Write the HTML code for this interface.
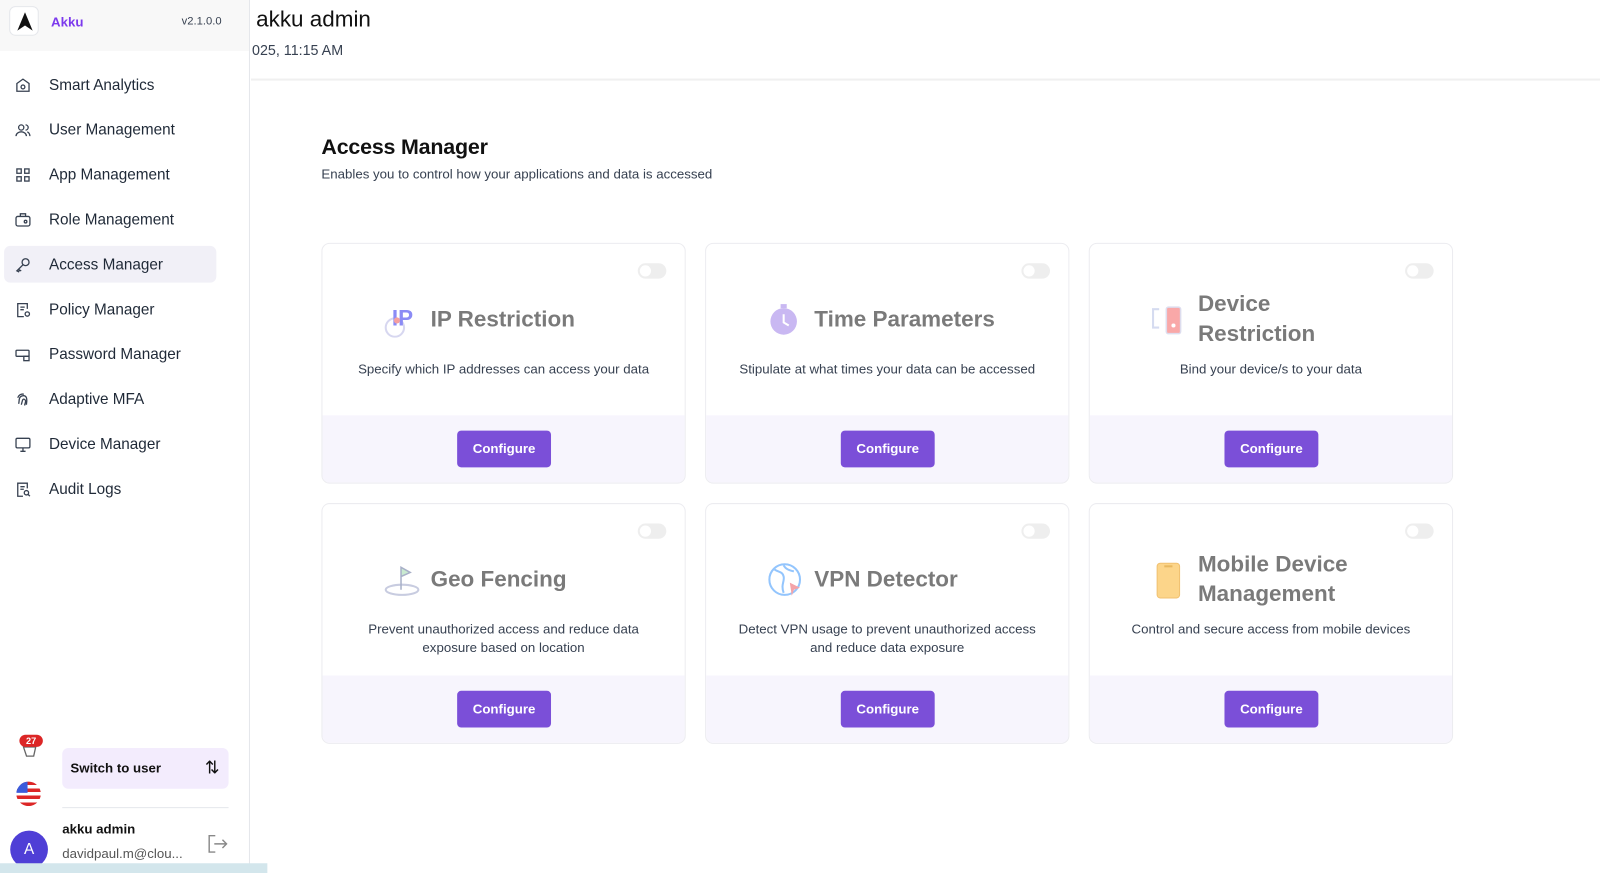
<!DOCTYPE html>
<html><head><meta charset="utf-8"><style>
*{box-sizing:border-box;margin:0;padding:0}
body{width:1600px;height:869px;overflow:hidden;background:#fff;font-family:"Liberation Sans",sans-serif;color:#1f2937;position:relative}
#w{position:absolute;left:0;top:0;width:1568px;height:852px;transform:scale(1.0204);transform-origin:0 0}
.side{position:absolute;left:0;top:0;width:245px;height:852px;border-right:1px solid #e5e7eb;background:#fff}
.brand{height:50px;background:#f8f8f8;position:relative}
.logo{position:absolute;left:9px;top:6px;width:29px;height:29px;border:1px solid #e5e7eb;border-radius:6px;background:#fff}
.brand .n{position:absolute;left:50px;top:14px;font-size:13px;color:#7c3aed;font-weight:bold}
.brand .v{position:absolute;left:178px;top:15px;font-size:11px;color:#374151}
.nav{position:absolute;left:4px;top:65px;width:208px}
.it{height:36px;margin-bottom:8px;display:flex;align-items:center;font-size:15px;color:#1f2937;border-radius:6px}
.it.a{background:#f1f0f7}
.it svg{margin:0 17px 0 10px;width:17px;height:17px;stroke:#374151;fill:none;stroke-width:1.5}
.hdr{position:absolute;left:246px;top:0;right:0;height:79px;border-bottom:2px solid #f0f0f0}
.hdr h1{position:absolute;left:5px;top:6px;font-size:22px;font-weight:normal;color:#111}
.hdr p{position:absolute;left:1px;top:41px;font-size:14px;color:#374151}
.tt{position:absolute;left:315px;top:133px;font-size:21px;color:#111;font-weight:bold;letter-spacing:-0.2px}
.st{position:absolute;left:315px;top:163px;font-size:13px;color:#374151}
.card{position:absolute;width:357px;height:236px;border:1px solid #ececf0;border-radius:8px;overflow:hidden;background:#fff}
.card .ft{position:absolute;left:0;right:0;bottom:0;height:66px;background:#f7f5fd}
.btn{position:absolute;left:132px;top:15px;width:92px;height:36px;background:#7b4fd8;border-radius:4px;color:#fff;font-weight:bold;font-size:13px;text-align:center;line-height:36px}
.tg{position:absolute;right:18px;top:19px;width:28px;height:15px;border-radius:8px;background:#eee}
.tg:after{content:"";position:absolute;left:2px;top:2px;width:11px;height:11px;border-radius:50%;background:#fff}
.ttl{position:absolute;font-size:22px;font-weight:bold;color:#7a7a7a;line-height:29px}
.ds{position:absolute;left:20px;right:20px;text-align:center;font-size:13px;color:#374151;line-height:18px}
.ic{position:absolute}
</style></head><body><div id="w">
<div class="side">
 <div class="brand"><div class="logo"><svg width="29" height="29" viewBox="0 0 29 29"><path d="M14.5 5 L22 23 L14.5 18 L7 23 Z" fill="#111"/></svg></div><span class="n">Akku</span><span class="v">v2.1.0.0</span></div>
 <div class="nav">
  <div class="it"><svg viewBox="0 0 20 20"><path d="M3 8l7-5 7 5v9H3z"/><circle cx="10" cy="12" r="2.2"/></svg>Smart Analytics</div>
  <div class="it"><svg viewBox="0 0 20 20"><circle cx="8" cy="7" r="3"/><path d="M2 17c0-3 3-5 6-5s6 2 6 5M13 4a3 3 0 010 6M15 12c2 1 3 3 3 5"/></svg>User Management</div>
  <div class="it"><svg viewBox="0 0 20 20"><rect x="3" y="3" width="5" height="5"/><rect x="12" y="3" width="5" height="5"/><rect x="3" y="12" width="5" height="5"/><rect x="12" y="12" width="5" height="5"/></svg>App Management</div>
  <div class="it"><svg viewBox="0 0 20 20"><rect x="2" y="6" width="16" height="11" rx="2"/><path d="M7 6V3h6v3"/><circle cx="13" cy="12" r="1.5"/></svg>Role Management</div>
  <div class="it a"><svg viewBox="0 0 20 20"><circle cx="13" cy="7" r="4"/><path d="M10 10L3 17l2 1 1-2 2 1"/></svg>Access Manager</div>
  <div class="it"><svg viewBox="0 0 20 20"><path d="M15 9V3H4v15h7"/><path d="M7 7h5M7 10h4"/><circle cx="15" cy="15" r="2.5"/></svg>Policy Manager</div>
  <div class="it"><svg viewBox="0 0 20 20"><rect x="2" y="5" width="15" height="7" rx="1"/><rect x="11" y="12" width="6" height="5"/></svg>Password Manager</div>
  <div class="it"><svg viewBox="0 0 20 20"><path d="M5 15c1-3 0-6 2-8s6-2 7 1 0 6 0 8M8 16c1-2 1-5 2-6s3 0 3 2-1 3-1 5M4 8c1-3 4-5 7-4"/></svg>Adaptive MFA</div>
  <div class="it"><svg viewBox="0 0 20 20"><rect x="2" y="3" width="16" height="11" rx="1.5"/><path d="M7 18h6M10 14v4"/></svg>Device Manager</div>
  <div class="it"><svg viewBox="0 0 20 20"><path d="M15 9V3H4v15h6"/><path d="M7 7h5M7 10h4"/><circle cx="14" cy="14" r="2.5"/><path d="M16 16l2 2"/></svg>Audit Logs</div>
 </div>
 <svg style="position:absolute;left:19px;top:726px" width="22" height="20" viewBox="0 0 22 20"><path d="M4 6h12l-2 9H7z" fill="none" stroke="#666" stroke-width="1.3"/></svg>
 <div style="position:absolute;left:19px;top:720px;width:23px;height:12px;background:#dc2626;border-radius:7px;color:#fff;font-size:9px;font-weight:bold;text-align:center;line-height:12px">27</div>
 <div style="position:absolute;left:16px;top:766px;width:24px;height:24px;border-radius:50%;overflow:hidden;background:repeating-linear-gradient(#dc2626 0 3.4px,#fff 3.4px 6.8px)"><div style="width:11px;height:11px;background:#3b5bdb"></div></div>
 <div style="position:absolute;left:61px;top:733px;width:163px;height:40px;background:#f3ecfd;border-radius:6px;font-size:13px;font-weight:bold;line-height:40px;padding-left:8px;color:#111">Switch to user<span style="position:absolute;right:9px;top:0;font-weight:normal;font-size:17px">⇅</span></div>
 <div style="position:absolute;left:61px;top:791px;width:163px;border-top:1px solid #e5e7eb"></div>
 <div style="position:absolute;left:61px;top:805px;font-size:13px;font-weight:bold;color:#111">akku admin</div>
 <div style="position:absolute;left:61px;top:829px;font-size:13px;color:#555">davidpaul.m@clou...</div>
 <div style="position:absolute;left:10px;top:814px;width:37px;height:37px;border-radius:50%;background:#4f3fd6;color:#fff;text-align:center;line-height:37px;font-size:15px">A</div>
 <svg style="position:absolute;left:202px;top:817px" width="22" height="20" viewBox="0 0 22 20" fill="none" stroke="#888" stroke-width="1.4"><path d="M9 2H3v16h6M8 10h12M16 6l4 4-4 4"/></svg>
</div>
<div style="position:absolute;left:0;top:846px;width:262px;height:10px;background:#d3e6ec"></div>
<div class="hdr"><h1>akku admin</h1><p>025, 11:15 AM</p></div>
<div class="tt">Access Manager</div>
<div class="st">Enables you to control how your applications and data is accessed</div>

<div class="card" style="left:315px;top:238px"><div class="tg"></div>
 <svg class="ic" style="left:58px;top:58px" width="40" height="34" viewBox="0 0 40 34"><circle cx="13" cy="24" r="9" fill="none" stroke="#d7d7f0" stroke-width="2"/><text x="10" y="22" font-size="22" font-weight="bold" fill="#8b8bf5" font-family="Liberation Sans">IP</text><circle cx="15" cy="17" r="3" fill="#f6a0a0"/></svg>
 <div class="ttl" style="left:106px;top:59px">IP Restriction</div>
 <div class="ds" style="top:114px">Specify which IP addresses can access your data</div>
 <div class="ft"><div class="btn">Configure</div></div></div>

<div class="card" style="left:691px;top:238px"><div class="tg"></div>
 <svg class="ic" style="left:60px;top:57px" width="32" height="34" viewBox="0 0 32 34"><circle cx="16" cy="19" r="13" fill="#c9b8f2"/><rect x="13" y="2" width="6" height="4" fill="#c9b8f2"/><path d="M16 12v8l5 3" stroke="#fff" stroke-width="2" fill="none"/></svg>
 <div class="ttl" style="left:106px;top:59px">Time Parameters</div>
 <div class="ds" style="top:114px">Stipulate at what times your data can be accessed</div>
 <div class="ft"><div class="btn">Configure</div></div></div>

<div class="card" style="left:1067px;top:238px"><div class="tg"></div>
 <svg class="ic" style="left:58px;top:58px" width="40" height="34" viewBox="0 0 40 34"><path d="M10 6H4v18h6" fill="none" stroke="#d5dbf0" stroke-width="2"/><rect x="17" y="4" width="14" height="26" rx="2" fill="#f9a8a8" stroke="#dde" stroke-width="1.5"/><circle cx="24" cy="22" r="2" fill="#fff"/></svg>
 <div class="ttl" style="left:106px;top:44px">Device<br>Restriction</div>
 <div class="ds" style="top:114px">Bind your device/s to your data</div>
 <div class="ft"><div class="btn">Configure</div></div></div>

<div class="card" style="left:315px;top:493px"><div class="tg"></div>
 <svg class="ic" style="left:58px;top:58px" width="40" height="34" viewBox="0 0 40 34"><ellipse cx="20" cy="26" rx="16" ry="5" fill="none" stroke="#c8cce0" stroke-width="2"/><path d="M19 26V4l9 5-9 4" fill="#c9ead0" stroke="#a8b0c8" stroke-width="1.5"/></svg>
 <div class="ttl" style="left:106px;top:59px">Geo Fencing</div>
 <div class="ds" style="top:114px">Prevent unauthorized access and reduce data exposure based on location</div>
 <div class="ft"><div class="btn">Configure</div></div></div>

<div class="card" style="left:691px;top:493px"><div class="tg"></div>
 <svg class="ic" style="left:58px;top:56px" width="40" height="36" viewBox="0 0 40 36"><circle cx="19" cy="18" r="15" fill="none" stroke="#93c5fd" stroke-width="2"/><path d="M9 8c4 3 8 2 9 7s-3 8 0 16M18 4c2 4 6 5 10 6" fill="none" stroke="#93c5fd" stroke-width="2"/><path d="M24 21l10 5-6 2-2 6z" fill="#f4a3a8"/></svg>
 <div class="ttl" style="left:106px;top:59px">VPN Detector</div>
 <div class="ds" style="top:114px">Detect VPN usage to prevent unauthorized access and reduce data exposure</div>
 <div class="ft"><div class="btn">Configure</div></div></div>

<div class="card" style="left:1067px;top:493px"><div class="tg"></div>
 <svg class="ic" style="left:62px;top:56px" width="30" height="38" viewBox="0 0 30 38"><rect x="4" y="2" width="22" height="34" rx="3" fill="#fcd58a" stroke="#f0c070"/><rect x="11" y="4" width="8" height="2" fill="#e8b860"/></svg>
 <div class="ttl" style="left:106px;top:44px">Mobile Device<br>Management</div>
 <div class="ds" style="top:114px">Control and secure access from mobile devices</div>
 <div class="ft"><div class="btn">Configure</div></div></div>
</div></body></html>
